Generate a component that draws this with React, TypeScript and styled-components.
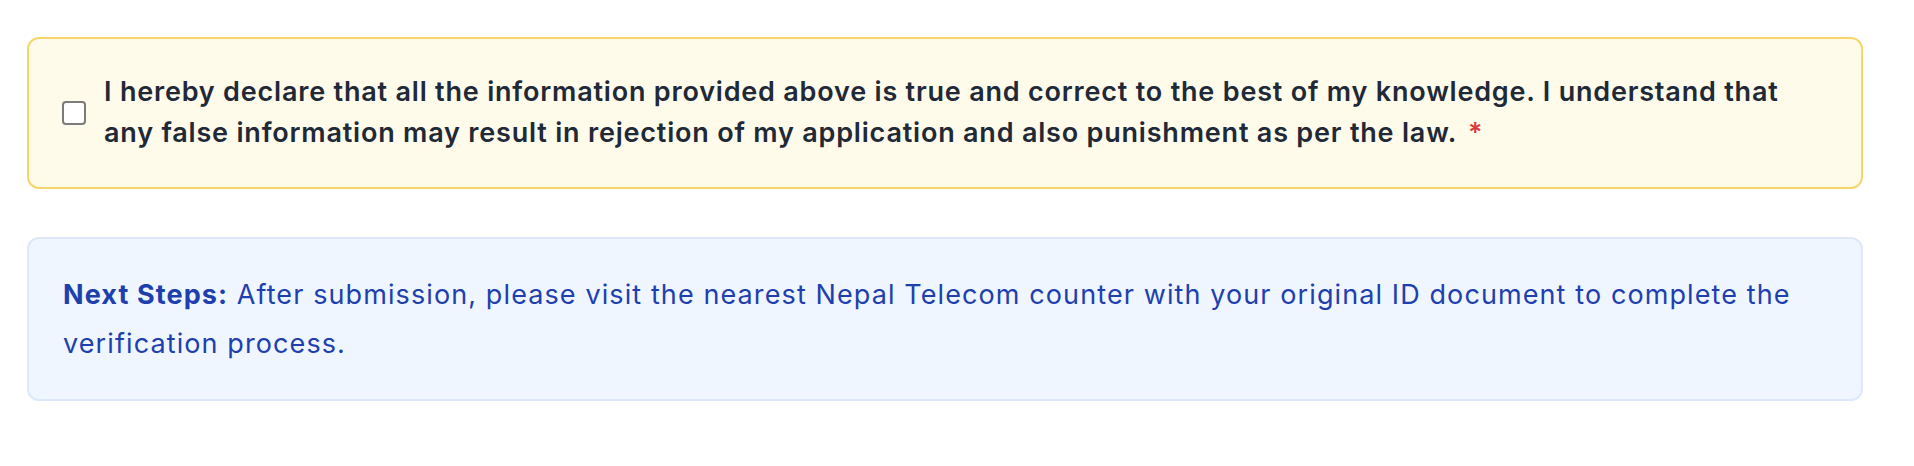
import React from "react";
import styled, { createGlobalStyle } from "styled-components";

const GlobalStyle = createGlobalStyle`
  html, body {
    margin: 0;
    padding: 0;
    background: #ffffff;
  }
  body {
    font-family: Inter, "Noto Sans", "Liberation Sans", sans-serif;
    -webkit-font-smoothing: antialiased;
  }
  * { box-sizing: border-box; }
`;

const Page = styled.div`
  display: flex;
  flex-direction: column;
  gap: 48px;
  padding: 37px 51px 0 27px;
  width: 1914px;
  height: 466px;
`;

const DeclarationBox = styled.label`
  display: flex;
  align-items: center;
  gap: 18px;
  padding: 33px 34px 34px 33px;
  background: #fefbeb;
  border: 2px solid #f7d669;
  border-radius: 12px;
  cursor: pointer;
`;

const Checkbox = styled.input.attrs({ type: "checkbox" })`
  appearance: none;
  -webkit-appearance: none;
  flex: 0 0 auto;
  width: 24px;
  height: 24px;
  margin: 0;
  background: #ffffff;
  border: 2px solid #7b7b7b;
  border-radius: 4px;
`;

const DeclarationText = styled.span`
  font-size: 27px;
  line-height: 40.5px;
  font-weight: 600;
  letter-spacing: 0.8px;
  color: #1f2937;
`;

const Required = styled.span`
  color: #dc3a3f;
  margin-left: 4px;
`;

const InfoBox = styled.div`
  padding: 31px 34px 31px 34px;
  background: #eff6ff;
  border: 2px solid #dde8fc;
  border-radius: 12px;
`;

const InfoText = styled.p`
  margin: 0;
  font-size: 27px;
  line-height: 49px;
  font-weight: 400;
  letter-spacing: 1.1px;
  color: #1e40af;
`;

const Strong = styled.strong`
  font-weight: 700;
`;

export default function App() {
  return (
    <>
      <GlobalStyle />
      <Page>
        <DeclarationBox>
          <Checkbox />
          <DeclarationText>
            I hereby declare that all the information provided above is true and correct to the best of my knowledge. I understand that any false information may result in rejection of my application and also punishment as per the law. <Required>*</Required>
          </DeclarationText>
        </DeclarationBox>
        <InfoBox>
          <InfoText>
            <Strong>Next Steps:</Strong> After submission, please visit the nearest Nepal Telecom counter with your original ID document to complete the verification process.
          </InfoText>
        </InfoBox>
      </Page>
    </>
  );
}
